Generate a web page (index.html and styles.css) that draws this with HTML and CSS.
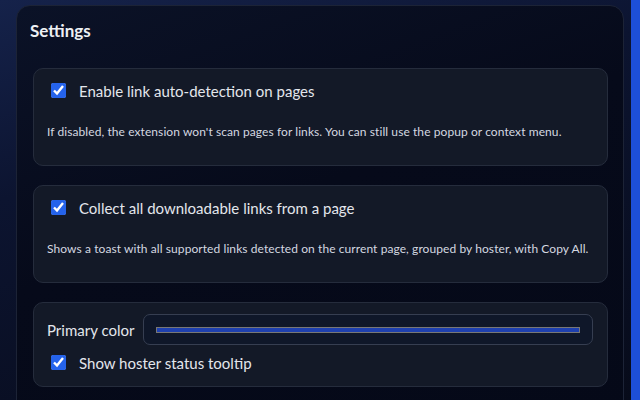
FILE: index.html
```html
<!DOCTYPE html>
<html lang="en">
<head>
<meta charset="utf-8">
<title>Settings</title>
<link rel="stylesheet" href="styles.css">
</head>
<body>
<div class="layout">
  <main class="content">
    <section class="panel">
      <h2 class="panel-title">Settings</h2>
      <div class="card">
        <label class="check-row"><input type="checkbox" checked><span>Enable link auto-detection on pages</span></label>
        <p class="desc">If disabled, the extension won't scan pages for links. You can still use the popup or context menu.</p>
      </div>
      <div class="card">
        <label class="check-row"><input type="checkbox" checked><span>Collect all downloadable links from a page</span></label>
        <p class="desc">Shows a toast with all supported links detected on the current page, grouped by hoster, with Copy All.</p>
      </div>
      <div class="card card-compact">
        <div class="color-row">
          <span class="color-label">Primary color</span>
          <div class="color-input"><span class="swatch"></span></div>
        </div>
        <label class="check-row"><input type="checkbox" checked><span>Show hoster status tooltip</span></label>
      </div>
    </section>
  </main>
  <div class="scroll-thumb"></div>
</div>
</body>
</html>
```
FILE: styles.css
```css
* { box-sizing: border-box; }
html, body { height: 100%; }
body {
  margin: 0;
  overflow: hidden;
  font-family: Lato, "Noto Sans", sans-serif;
  color: #e5e7eb;
  background: linear-gradient(165deg, #15224a 0%, #0c1430 35%, #070b1a 100%);
}
.layout {
  display: flex;
  height: 100%;
}
.content {
  flex: 1;
  padding: 5px 7px 0 16px;
  overflow: hidden;
}
.panel {
  height: 420px;
  border: 1px solid #1c2336;
  border-radius: 14px;
  background: linear-gradient(160deg, #0b1227 0%, #060a1a 45%, #050918 100%);
  padding: 14px 15px 14px 16px;
}
.panel-title {
  margin: 0 0 26px -3px;
  font-size: 17px;
  line-height: 22px;
  font-weight: 700;
  color: #eef0f4;
}
.card {
  border: 1px solid #252c3c;
  border-radius: 10px;
  background: #131927;
  padding: 12px 14px 25px 13px;
  margin-bottom: 19px;
}
.card-compact {
  padding: 11px 14px 14px 13px;
}
.check-row {
  display: flex;
  align-items: center;
  gap: 10px;
  height: 19px;
  font-size: 15px;
  color: #e3e6ec;
}
.check-row input {
  width: 15px;
  height: 15px;
  margin: 0 3px 0 4px;
  accent-color: #2563eb;
}
.desc {
  margin: 24px 0 0;
  font-size: 12px;
  line-height: 16px;
  letter-spacing: 0.08px;
  color: #d4d8e0;
}
.color-row {
  display: flex;
  align-items: center;
  gap: 9px;
  margin-bottom: 8px;
}
.color-label {
  font-size: 15px;
  color: #e3e6ec;
}
.color-input {
  flex: 1;
  height: 31px;
  border: 1px solid #363e51;
  border-radius: 7px;
  background: #0f1729;
  padding: 12px 12px;
  display: flex;
}
.swatch {
  flex: 1;
  height: 6px;
  border: 1px solid #777;
  background: #1e40af;
}
.scroll-thumb {
  width: 9px;
  background: #1d4fd8;
}
```
